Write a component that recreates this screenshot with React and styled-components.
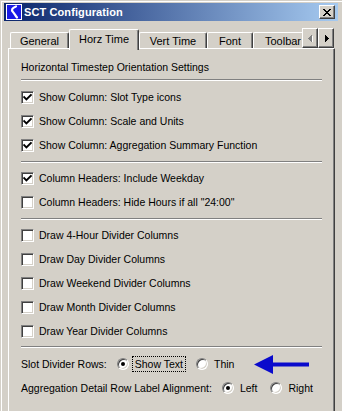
import React from "react";
import styled, { createGlobalStyle } from "styled-components";

const GlobalStyle = createGlobalStyle`
  html, body {
    margin: 0;
    padding: 0;
    background: #d4d0c8;
  }
  body {
    font-family: "Liberation Sans", Arial, sans-serif;
    font-size: 10.5px;
    color: #000;
  }
`;

const checkboxes = [
  [
    { label: "Show Column: Slot Type icons", checked: true },
    { label: "Show Column: Scale and Units", checked: true },
    { label: "Show Column: Aggregation Summary Function", checked: true },
  ],
  [
    { label: "Column Headers: Include Weekday", checked: true },
    { label: 'Column Headers: Hide Hours if all "24:00"', checked: false },
  ],
  [
    { label: "Draw 4-Hour Divider Columns", checked: false },
    { label: "Draw Day Divider Columns", checked: false },
    { label: "Draw Weekend Divider Columns", checked: false },
    { label: "Draw Month Divider Columns", checked: false },
    { label: "Draw Year Divider Columns", checked: false },
  ],
];

const tabs = [
  { name: "General", width: 59 },
  { name: "Horz Time", width: 70, active: true },
  { name: "Vert Time", width: 68 },
  { name: "Font", width: 46 },
  { name: "Toolbar", width: 60 },
];

const AppIcon = () => (
  <svg width="16" height="16" viewBox="0 0 16 16">
    <rect x="0" y="0" width="16" height="16" fill="#ffffff" />
    <rect x="1" y="1" width="14" height="14" fill="#1a1ae6" />
    <path
      d="M10 2.5 C6 4, 5 6, 7 8 C8.5 9.5, 9 11, 11 13.5"
      stroke="#ffffff"
      strokeWidth="2.2"
      fill="none"
      strokeLinecap="round"
    />
  </svg>
);

const CloseGlyph = () => (
  <svg width="8" height="7" viewBox="0 0 8 7" shapeRendering="crispEdges">
    <path
      d="M0 0h2v1h-2z M6 0h2v1h-2z M1 1h2v1h-2z M5 1h2v1h-2z M2 2h4v1h-4z M3 3h2v1h-2z M2 4h4v1h-4z M1 5h2v1h-2z M5 5h2v1h-2z M0 6h2v1h-2z M6 6h2v1h-2z"
      fill="#000"
    />
  </svg>
);

const Arrow = ({ dir, disabled }) => (
  <svg width="5" height="9" viewBox="0 0 5 9" shapeRendering="crispEdges">
    {dir === "left" ? (
      <>
        {disabled && <path d="M5 1 L1 5 L5 9 Z" fill="#ffffff" />}
        <path d="M4 0 L0 4.5 L4 9 Z" fill={disabled ? "#808080" : "#000"} />
      </>
    ) : (
      <path d="M1 0 L5 4.5 L1 9 Z" fill="#000" />
    )}
  </svg>
);

const CheckMark = () => (
  <svg width="9" height="9" viewBox="0 0 9 9">
    <polyline
      points="1.2,4.2 3.4,6.4 7.8,2"
      stroke="#000"
      strokeWidth="1.9"
      fill="none"
      strokeLinecap="square"
    />
  </svg>
);

const BlueArrow = () => (
  <svg width="56" height="19" viewBox="0 0 56 19">
    <path d="M0 9.5 L19 0 L19 7.5 L55 7.5 L55 11.5 L19 11.5 L19 19 Z" fill="#0a0acc" />
  </svg>
);

const Checkbox = ({ label, checked }) => (
  <CheckRow>
    <CheckBoxBox>{checked && <CheckMark />}</CheckBoxBox>
    <span>{label}</span>
  </CheckRow>
);

const Radio = ({ label, checked, focused }) => (
  <RadioOption>
    <RadioCircle>{checked && <RadioDot />}</RadioCircle>
    <RadioLabel $focused={focused}>{label}</RadioLabel>
  </RadioOption>
);

export default function App() {
  return (
    <>
      <GlobalStyle />
      <Window>
        <TitleBar>
          <AppIcon />
          <Title>SCT Configuration</Title>
          <CloseButton>
            <CloseGlyph />
          </CloseButton>
        </TitleBar>

        <TabStrip>
          <TabList>
            {tabs.map((t) => (
              <Tab key={t.name} $active={t.active} $width={t.width}>
                {t.name}
              </Tab>
            ))}
          </TabList>
          <ScrollButton>
            <Arrow dir="left" disabled />
          </ScrollButton>
          <ScrollButton>
            <Arrow dir="right" />
          </ScrollButton>
        </TabStrip>

        <Panel>
          <Heading>Horizontal Timestep Orientation Settings</Heading>
          <Separator />
          {checkboxes.map((group, i) => (
            <React.Fragment key={i}>
              <Group $top={i === 0 ? 4 : 3} $bottom={i === 2 ? 3 : 4}>
                {group.map((c) => (
                  <Checkbox key={c.label} {...c} />
                ))}
              </Group>
              <Separator />
            </React.Fragment>
          ))}
          <Group $top={4} $bottom={10}>
            <RadioRow>
              <span>Slot Divider Rows:</span>
              <Radio label="Show Text" checked focused />
              <Radio label="Thin" />
              <Pointer>
                <BlueArrow />
              </Pointer>
            </RadioRow>
            <RadioRow>
              <span>Aggregation Detail Row Label Alignment:</span>
              <Radio label="Left" checked />
              <Radio label="Right" />
            </RadioRow>
          </Group>
        </Panel>
      </Window>
    </>
  );
}

const Window = styled.div`
  width: 342px;
  height: 411px;
  box-sizing: border-box;
  padding: 3px 4px 0 4px;
  background: #d4d0c8;
  box-shadow: inset 1px 1px 0 #d4d0c8, inset 2px 2px 0 #ffffff;
  overflow: hidden;
`;

const TitleBar = styled.div`
  display: flex;
  align-items: center;
  height: 18px;
  width: 334px;
  padding: 0 3px 0 2px;
  box-sizing: border-box;
  background: linear-gradient(to right, #0a246a, #a6caf0);
`;

const Title = styled.div`
  flex: 1;
  margin-left: 2px;
  color: #ffffff;
  font-weight: bold;
  font-size: 11px;
  letter-spacing: 0.1px;
`;

const CloseButton = styled.div`
  width: 16px;
  height: 14px;
  box-sizing: border-box;
  display: flex;
  align-items: center;
  justify-content: center;
  background: #d4d0c8;
  border: 1px solid;
  border-color: #ffffff #404040 #404040 #ffffff;
  box-shadow: inset -1px -1px 0 #808080;
`;

const TabStrip = styled.div`
  display: flex;
  align-items: flex-start;
  height: 21px;
  margin: 8px 0 -2px 6px;
  position: relative;
  z-index: 1;
  width: 324px;
`;

const TabList = styled.div`
  flex: 1;
  display: flex;
  align-items: flex-end;
  height: 21px;
  overflow: hidden;
`;

const Tab = styled.div`
  flex: none;
  width: ${(p) => p.$width}px;
  height: ${(p) => (p.$active ? 21 : 16)}px;
  margin-bottom: ${(p) => (p.$active ? 0 : 2)}px;
  box-sizing: border-box;
  display: flex;
  align-items: ${(p) => (p.$active ? "flex-start" : "center")};
  padding-top: ${(p) => (p.$active ? 3 : 0)}px;
  justify-content: center;
  font-size: 11px;
  background: #d4d0c8;
  border-top: 1px solid #ffffff;
  border-left: 1px solid #ffffff;
  border-right: 1px solid #404040;
  box-shadow: inset -1px 0 0 #808080;
  border-radius: 2px 2px 0 0;
  white-space: nowrap;
`;

const ScrollButton = styled.div`
  flex: none;
  width: 16px;
  height: 20px;
  margin-top: -1px;
  box-sizing: border-box;
  display: flex;
  align-items: center;
  justify-content: center;
  background: #d4d0c8;
  border: 1px solid;
  border-color: #ffffff #404040 #404040 #ffffff;
  box-shadow: inset -1px -1px 0 #808080;
`;

const Panel = styled.div`
  margin-left: 4px;
  width: 327px;
  height: 380px;
  box-sizing: border-box;
  padding: 11px 12px 0 12px;
  border-top: 1px solid #ffffff;
  border-left: 1px solid #ffffff;
  border-right: 1px solid #404040;
  box-shadow: inset -1px 0 0 #808080, inset 1px 1px 0 #d4d0c8;
`;

const Heading = styled.div`
  height: 14px;
  line-height: 14px;
  margin-bottom: 5px;
`;

const Separator = styled.div`
  border-top: 1px solid #808080;
  border-bottom: 1px solid #ffffff;
  height: 0;
`;

const Group = styled.div`
  padding: ${(p) => p.$top}px 0 ${(p) => p.$bottom}px;
  display: flex;
  flex-direction: column;
`;

const CheckRow = styled.div`
  height: 24px;
  display: flex;
  align-items: center;
  gap: 5px;
  white-space: nowrap;
`;

const CheckBoxBox = styled.div`
  flex: none;
  width: 13px;
  height: 13px;
  box-sizing: border-box;
  display: flex;
  align-items: center;
  justify-content: center;
  background: #ffffff;
  border: 1px solid;
  border-color: #808080 #ffffff #ffffff #808080;
  box-shadow: inset 1px 1px 0 #404040, inset -1px -1px 0 #d4d0c8;
`;

const RadioRow = styled.div`
  height: 24px;
  display: flex;
  align-items: center;
  gap: 10px;
  white-space: nowrap;
`;

const RadioOption = styled.div`
  display: flex;
  align-items: center;
  gap: 3px;
`;

const RadioCircle = styled.div`
  flex: none;
  width: 12px;
  height: 12px;
  box-sizing: border-box;
  border-radius: 50%;
  display: flex;
  align-items: center;
  justify-content: center;
  background: #ffffff;
  border: 1px solid;
  border-color: #808080 #ffffff #ffffff #808080;
  box-shadow: inset 1px 1px 0 #404040, inset -1px -1px 0 #d4d0c8;
`;

const RadioDot = styled.div`
  width: 4px;
  height: 4px;
  border-radius: 50%;
  background: #000;
`;

const RadioLabel = styled.span`
  padding: 1px 2px;
  border: 1px dotted ${(p) => (p.$focused ? "#000" : "transparent")};
`;

const Pointer = styled.div`
  display: flex;
  align-items: center;
  margin-left: 7px;
`;
